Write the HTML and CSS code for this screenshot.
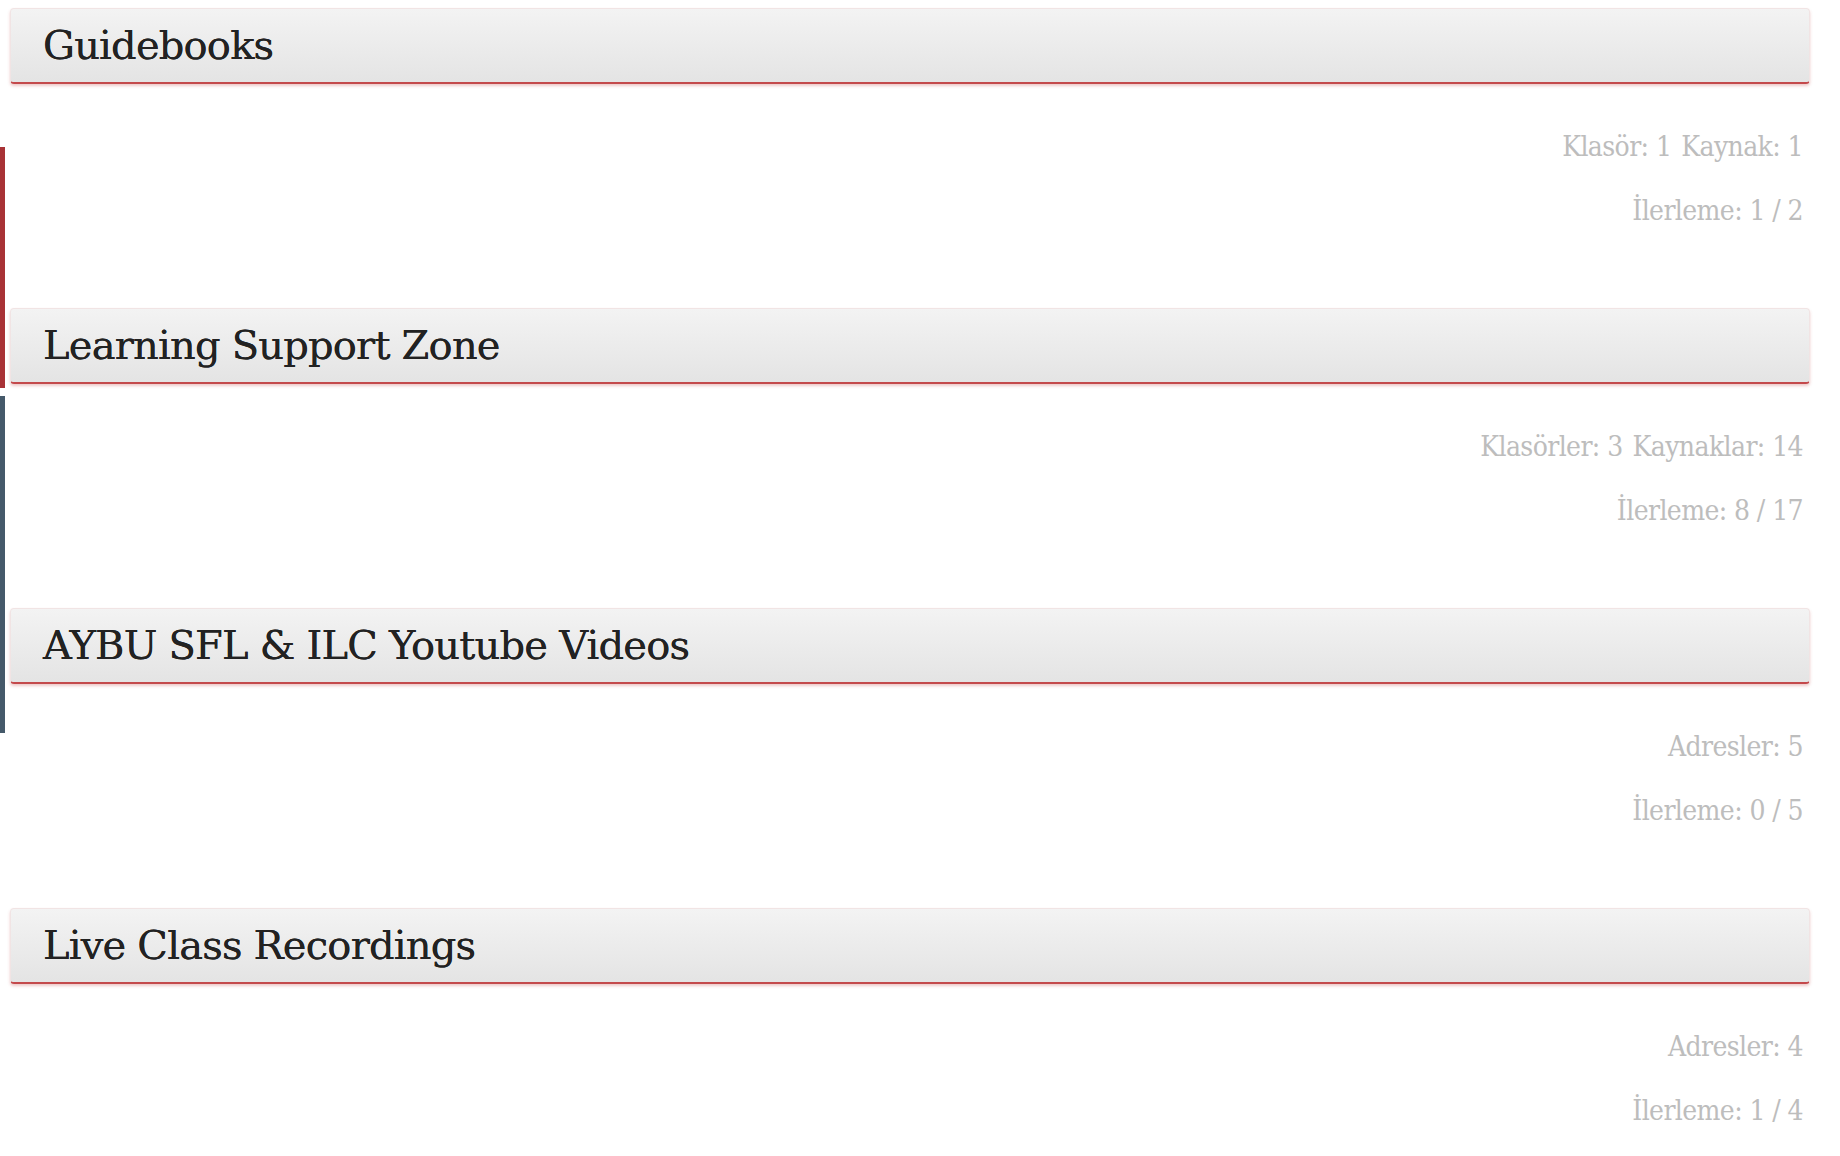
FILE: index.html
```html
<!DOCTYPE html>
<html lang="tr">
<head>
<meta charset="utf-8">
<title>Kaynaklar</title>
<link rel="stylesheet" href="styles.css">
</head>
<body>
<div class="rail rail-red"></div>
<div class="rail rail-slate"></div>
<main class="list">
  <section class="group">
    <h2 class="group-head">Guidebooks</h2>
    <div class="meta">
      <div class="meta-line"><span>Klasör: 1</span><span>Kaynak: 1</span></div>
      <div class="meta-line"><span>İlerleme: 1 / 2</span></div>
    </div>
  </section>
  <section class="group">
    <h2 class="group-head">Learning Support Zone</h2>
    <div class="meta">
      <div class="meta-line"><span>Klasörler: 3</span><span>Kaynaklar: 14</span></div>
      <div class="meta-line"><span>İlerleme: 8 / 17</span></div>
    </div>
  </section>
  <section class="group">
    <h2 class="group-head">AYBU SFL &amp; ILC Youtube Videos</h2>
    <div class="meta">
      <div class="meta-line"><span>Adresler: 5</span></div>
      <div class="meta-line"><span>İlerleme: 0 / 5</span></div>
    </div>
  </section>
  <section class="group">
    <h2 class="group-head">Live Class Recordings</h2>
    <div class="meta">
      <div class="meta-line"><span>Adresler: 4</span></div>
      <div class="meta-line"><span>İlerleme: 1 / 4</span></div>
    </div>
  </section>
</main>
</body>
</html>
```
FILE: styles.css
```css
html, body {
  margin: 0;
  padding: 0;
  background: #ffffff;
}
body {
  font-family: "DejaVu Serif Condensed", "DejaVu Serif", serif;
  position: relative;
  min-height: 1156px;
}
.rail {
  position: absolute;
  left: 0;
  width: 5px;
}
.rail-red {
  top: 147px;
  height: 241px;
  background: #a83236;
}
.rail-slate {
  top: 396px;
  height: 337px;
  background: #45596a;
}
.list {
  padding: 8px 30px 0 10px;
  display: flex;
  flex-direction: column;
}
.group {
  display: flex;
  flex-direction: column;
  margin-bottom: 66px;
}
.group-head {
  margin: 0;
  height: 76px;
  box-sizing: border-box;
  display: flex;
  align-items: center;
  padding: 0 0 2px 32px;
  font-family: "DejaVu Serif", serif;
  font-size: 40px;
  font-weight: normal;
  letter-spacing: -0.8px;
  color: #222222;
  text-shadow: 0 0 0.6px #222222;
  background: linear-gradient(to bottom, #f3f3f3 0%, #e4e4e4 100%);
  border: 1px solid #f1e4e4;
  border-bottom: 2px solid #c44a4c;
  border-radius: 4px;
  box-shadow: 0 2px 3px rgba(200, 80, 80, 0.3);
}
.meta {
  padding: 30px 7px 0 0;
  display: flex;
  flex-direction: column;
  align-items: flex-end;
}
.meta-line {
  height: 64px;
  display: flex;
  align-items: center;
  gap: 10px;
  font-size: 28px;
  color: #bdbdbd;
  letter-spacing: -0.6px;
}
```
